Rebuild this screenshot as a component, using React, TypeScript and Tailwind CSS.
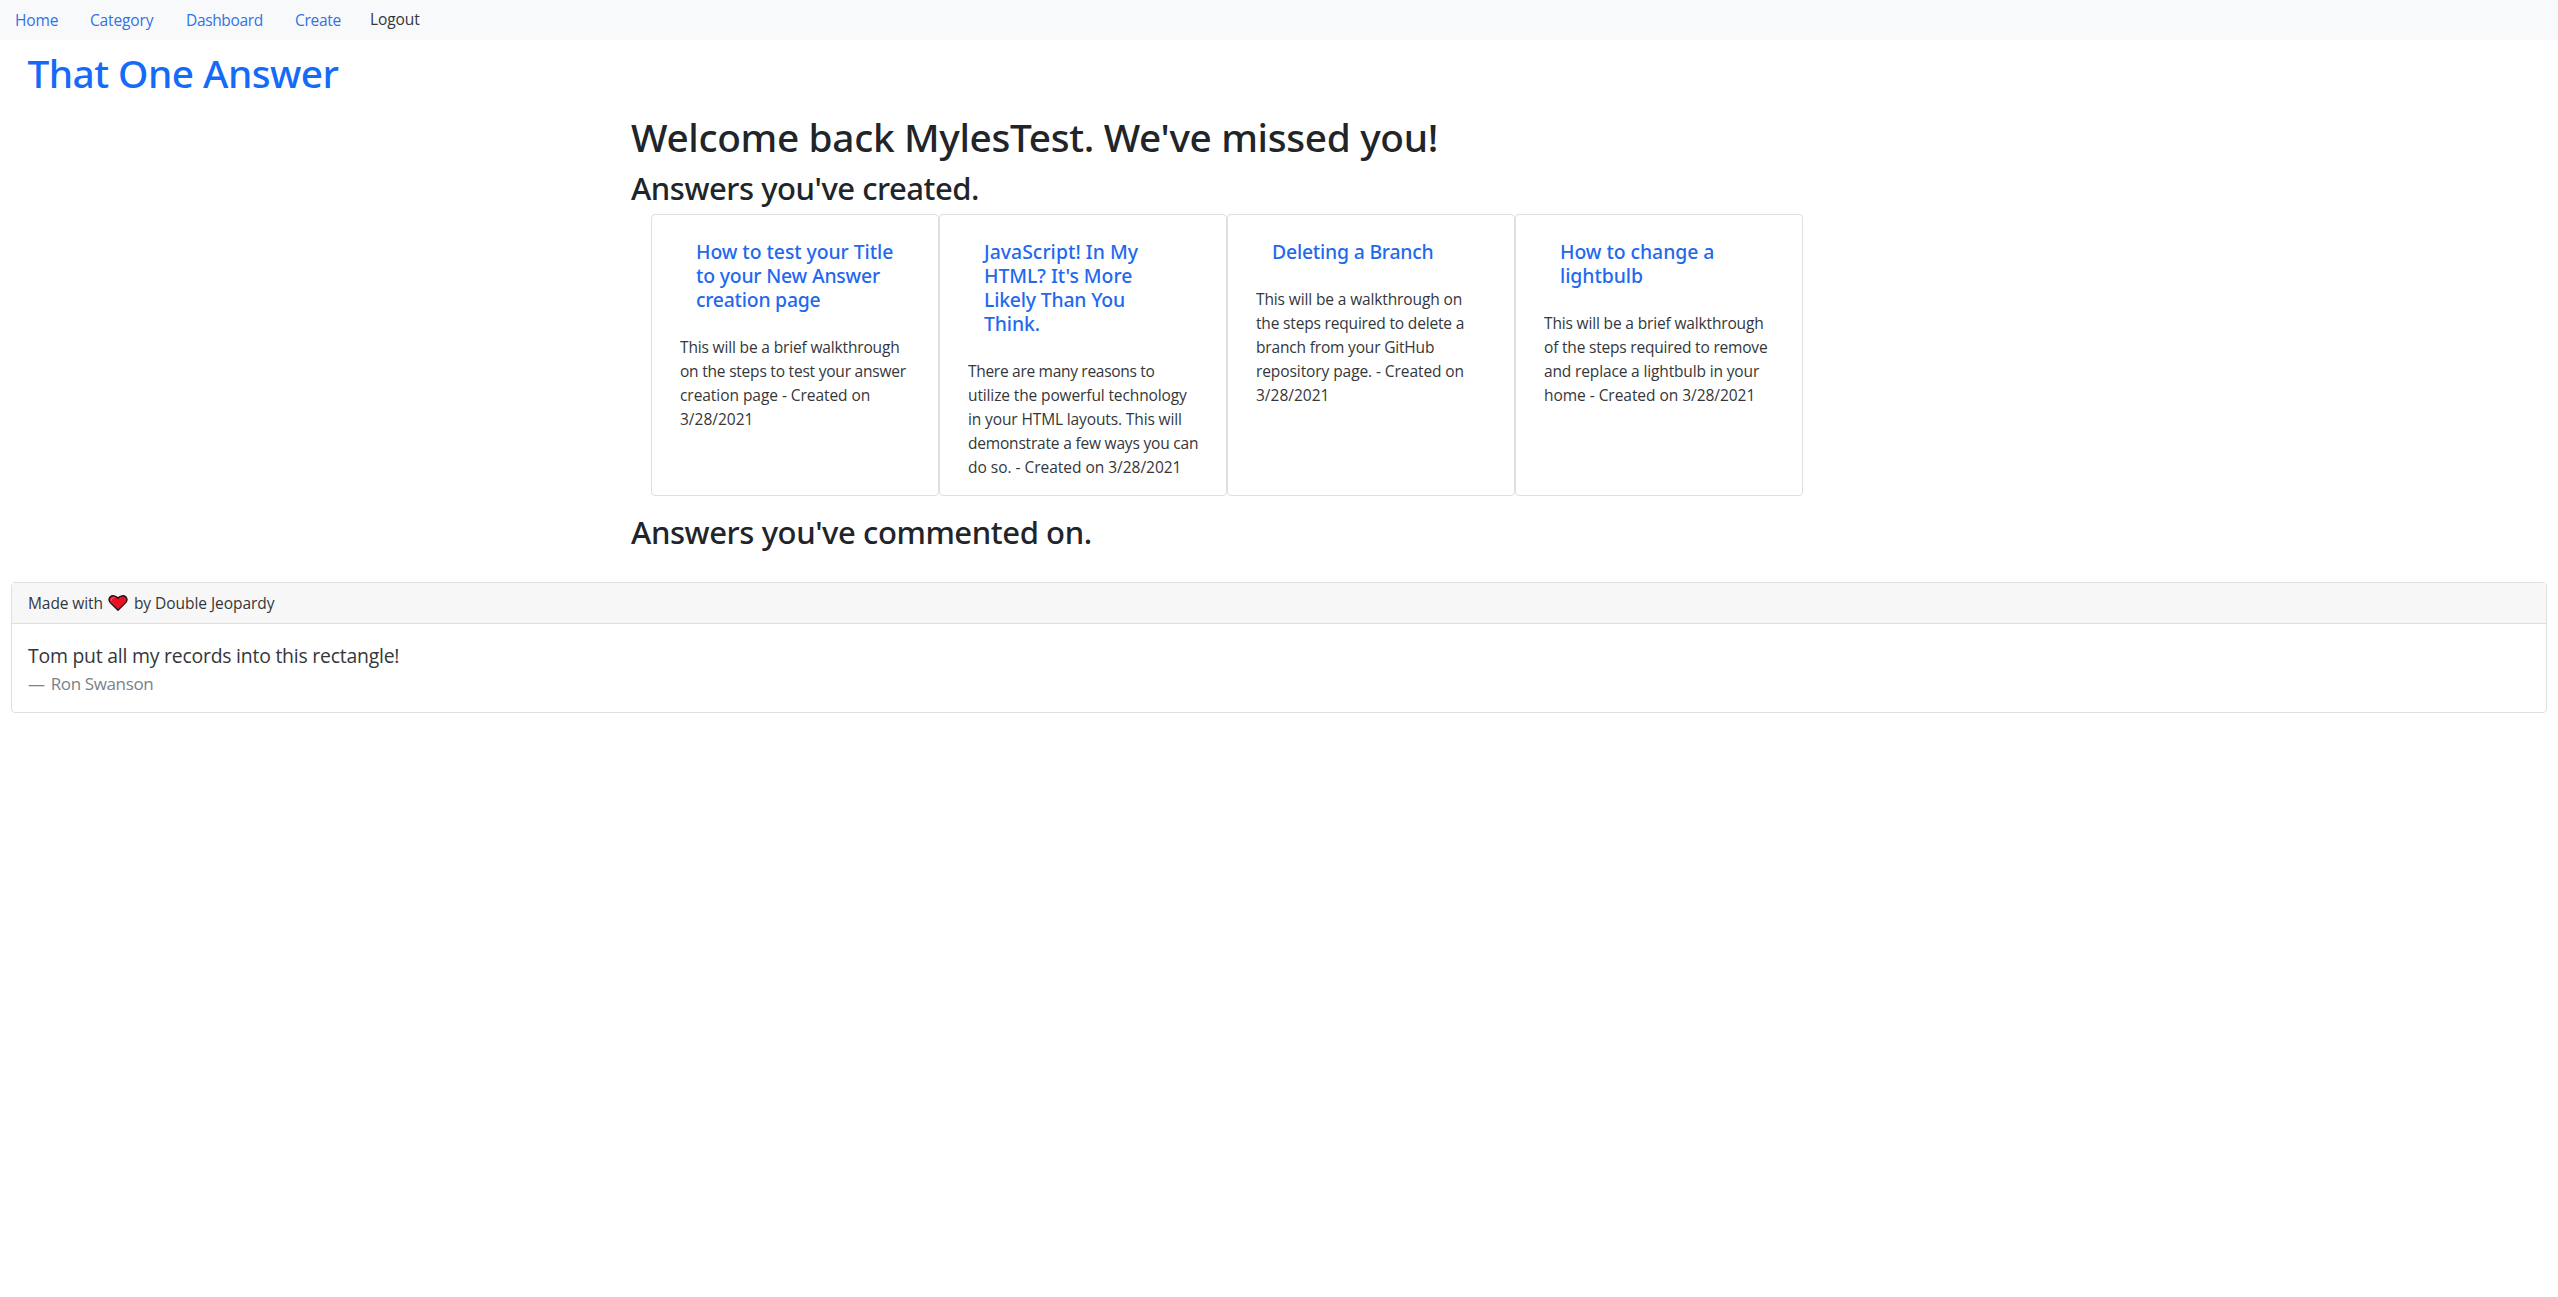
type Line = { text: string; tracking: string };
type Answer = { title: Line[]; body: Line[] };

const navLinks = [
  { label: "Home", box: "w-[75px] tracking-[-0.15px]" },
  { label: "Category", box: "w-24 tracking-[-0.15px]" },
  { label: "Dashboard", box: "w-[109px] tracking-[-0.36px]" },
  { label: "Create", box: "w-[75px] tracking-[-0.3px]" },
];

const answers: Answer[] = [
  {
    title: [
      { text: "How to test your Title", tracking: "tracking-[-0.07px]" },
      { text: "to your New Answer", tracking: "tracking-[-0.2px]" },
      { text: "creation page", tracking: "tracking-[-0.24px]" },
    ],
    body: [
      { text: "This will be a brief walkthrough", tracking: "tracking-[-0.16px]" },
      { text: "on the steps to test your answer", tracking: "tracking-[-0.22px]" },
      { text: "creation page - Created on", tracking: "tracking-[-0.06px]" },
      { text: "3/28/2021", tracking: "tracking-normal" },
    ],
  },
  {
    title: [
      { text: "JavaScript! In My", tracking: "tracking-[0.03px]" },
      { text: "HTML? It's More", tracking: "tracking-[-0.05px]" },
      { text: "Likely Than You", tracking: "tracking-[-0.19px]" },
      { text: "Think.", tracking: "tracking-[-0.1px]" },
    ],
    body: [
      { text: "There are many reasons to", tracking: "tracking-[-0.3px]" },
      { text: "utilize the powerful technology", tracking: "tracking-[-0.13px]" },
      { text: "in your HTML layouts. This will", tracking: "tracking-[-0.13px]" },
      { text: "demonstrate a few ways you can", tracking: "tracking-[-0.2px]" },
      { text: "do so. - Created on 3/28/2021", tracking: "tracking-[-0.03px]" },
    ],
  },
  {
    title: [{ text: "Deleting a Branch", tracking: "tracking-[-0.21px]" }],
    body: [
      { text: "This will be a walkthrough on", tracking: "tracking-[-0.13px]" },
      { text: "the steps required to delete a", tracking: "tracking-[-0.18px]" },
      { text: "branch from your GitHub", tracking: "tracking-[-0.18px]" },
      { text: "repository page. - Created on", tracking: "tracking-[-0.09px]" },
      { text: "3/28/2021", tracking: "tracking-normal" },
    ],
  },
  {
    title: [
      { text: "How to change a", tracking: "tracking-[-0.06px]" },
      { text: "lightbulb", tracking: "tracking-[-0.06px]" },
    ],
    body: [
      { text: "This will be a brief walkthrough", tracking: "tracking-[-0.16px]" },
      { text: "of the steps required to remove", tracking: "tracking-[-0.2px]" },
      { text: "and replace a lightbulb in your", tracking: "tracking-[-0.15px]" },
      { text: "home - Created on 3/28/2021", tracking: "tracking-[-0.05px]" },
    ],
  },
];

function Lines({ lines }: { lines: Line[] }) {
  return (
    <>
      {lines.map((line) => (
        <span key={line.text} className={`block whitespace-nowrap ${line.tracking}`}>
          {line.text}
        </span>
      ))}
    </>
  );
}

function AnswerCard({ title, body }: Answer) {
  return (
    <article className="w-72 rounded border border-[#dfdfdf] bg-white pt-[25px] pr-4 pb-4 pl-7">
      <h5 className="pl-4 font-['Noto_Sans',sans-serif] text-[19.4px] leading-6 font-medium text-[#1f69ee]">
        <a href="#">
          <Lines lines={title} />
        </a>
      </h5>
      <p className="mt-[23px] leading-6">
        <Lines lines={body} />
      </p>
    </article>
  );
}

function Heart() {
  return (
    <svg className="h-4 w-5" viewBox="0 0 20 16" aria-label="love">
      <path
        d="M10 15.2 2.200 7.600C.5 5.800.6 3.300 2.100 1.900 4 .2 7.300.5 9 2.200L10 3.200l1-1C12.700.5 16 .2 17.900 1.900c1.500 1.400 1.600 3.900-.1 5.700Z"
        fill="#e81224"
        stroke="#1b1014"
        strokeWidth="1.3"
        strokeLinejoin="round"
      />
      <path d="M3.300 5.200C3.300 3.500 4.500 2.500 6 2.500" fill="none" stroke="#f4757f" strokeWidth="1" strokeLinecap="round" />
    </svg>
  );
}

export default function App() {
  return (
    <div className="min-h-screen bg-white font-['Open_Sans',sans-serif] text-[15.52px] text-[#33373b]">
      <nav className="flex h-10 items-center bg-[#f8f9fb] pl-[15px] leading-6">
        {navLinks.map((link) => (
          <a key={link.label} href="#" className={`text-[#2f73e6] ${link.box}`}>
            {link.label}
          </a>
        ))}
        <button className="pb-0.5 leading-6 tracking-[-0.1px]">Logout</button>
      </nav>

      <h1 className="mt-[9px] pl-[27.5px] font-['Noto_Sans',sans-serif] text-[38.8px] leading-[48px] font-medium tracking-[-0.54px] text-[#146bf8]">
        <a href="#">That One Answer</a>
      </h1>

      <main className="mx-auto mt-4 w-[1296px] font-['Noto_Sans',sans-serif] font-medium">
        <h1 className="text-[38.8px] leading-[48px] tracking-[-0.34px] text-[#212529]">
          Welcome back MylesTest. We've missed you!
        </h1>
        <h2 className="mt-2 text-[31.04px] leading-[38px] tracking-[-0.48px] text-[#212529]">
          Answers you've created.
        </h2>
        <section className="mt-[7px] flex h-[282px] pl-5 font-['Open_Sans',sans-serif] font-normal">
          {answers.map((answer) => (
            <AnswerCard key={answer.title[0].text} {...answer} />
          ))}
        </section>
        <h2 className="mt-[17px] text-[31.04px] leading-[38px] tracking-[-0.42px] text-[#212529]">
          Answers you've commented on.
        </h2>
      </main>

      <footer className="mx-[11px] mt-[31px] h-[131px] rounded border border-[#dfdfdf]">
        <div className="flex h-[41px] items-center border-b border-[#dfdfdf] bg-[#f7f7f7] pl-4 leading-6">
          <span className="tracking-[-0.1px]">Made with</span>
          <span className="ml-[5px] flex">
            <Heart />
          </span>
          <span className="ml-1.5 tracking-[-0.05px]">by Double Jeopardy</span>
        </div>
        <blockquote className="pt-[17px] pl-4">
          <p className="text-[19.4px] leading-[30px] tracking-[-0.22px]">
            Tom put all my records into this rectangle!
          </p>
          <cite className="flex text-[17px] leading-[26px] tracking-[-0.36px] text-[#7a828a] not-italic">
            <span className="mr-1.5">—</span>
            <span>Ron Swanson</span>
          </cite>
        </blockquote>
      </footer>
    </div>
  );
}
